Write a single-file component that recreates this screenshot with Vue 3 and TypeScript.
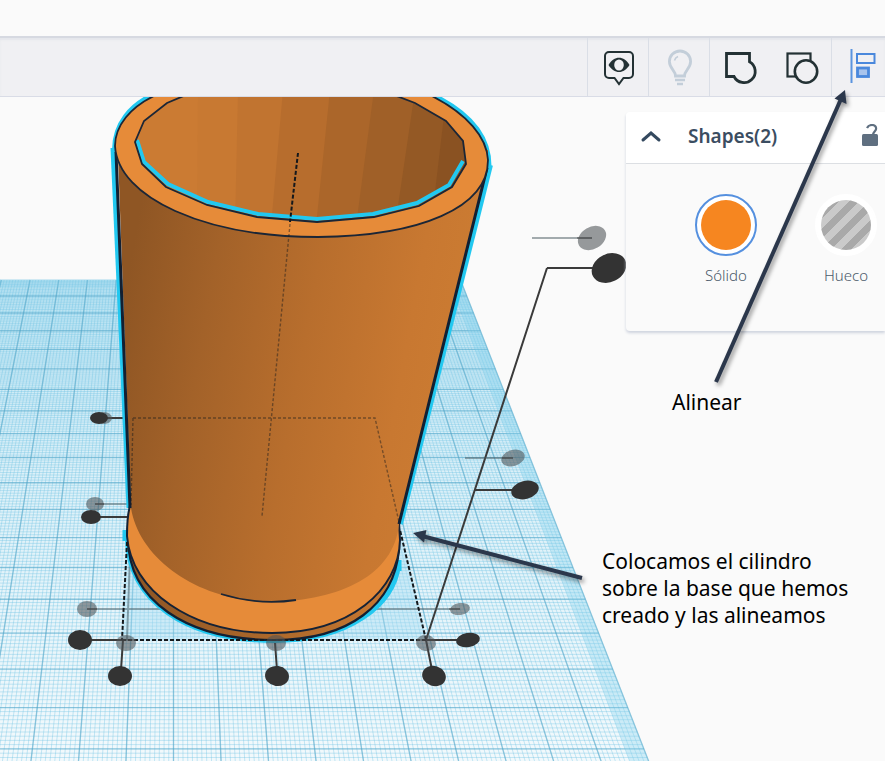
<script setup lang="ts">
import { ref } from 'vue'

interface Handle {
  x: number
  y: number
  rx: number
  ry: number
  tilt: number
  soft?: boolean
}

// Perspective of the workplane: every column meets at HORIZON, rows thin out with depth.
const HORIZON = -454
const CENTER_X = 173.5
const COLUMN_RATE = 0.0391

const columnX = (k: number, y: number): number => CENTER_X + k * (y - HORIZON) * COLUMN_RATE
const rowY = (n: number): number => 1 / (1 / 750 - n * 0.00002953) + HORIZON

function columnsPath(from: number, to: number, step: number): string {
  const parts: string[] = []
  for (let i = 0; i <= Math.round((to - from) / step); i++) {
    const k = from + i * step
    parts.push(`M${columnX(k, 280).toFixed(1)} 280L${columnX(k, 770).toFixed(1)} 770`)
  }
  return parts.join('')
}

function rowsPath(from: number, to: number, step: number): string {
  const parts: string[] = []
  for (let i = 0; i <= Math.round((to - from) / step); i++) {
    const y = rowY(from + i * step)
    parts.push(`M0 ${y.toFixed(1)}H${columnX(10, y).toFixed(1)}`)
  }
  return parts.join('')
}

const minorColumns = columnsPath(-7, 10, 0.1)
const minorRows = rowsPath(-1, 17.4, 0.1)
const majorColumns = columnsPath(-7, 10, 1)
const majorRows = rowsPath(0, 17, 1)

const handles: Handle[] = [
  { x: 104, y: 418, rx: 8, ry: 6, tilt: 0, soft: true },
  { x: 99, y: 418, rx: 9, ry: 6, tilt: 0 },
  { x: 95, y: 504, rx: 9, ry: 7, tilt: 0, soft: true },
  { x: 91, y: 517, rx: 10, ry: 7, tilt: 0 },
  { x: 87, y: 609, rx: 10, ry: 8, tilt: 0, soft: true },
  { x: 80, y: 640, rx: 12, ry: 10, tilt: 0 },
  { x: 126, y: 643, rx: 10, ry: 8, tilt: 0, soft: true },
  { x: 120, y: 676, rx: 12, ry: 10, tilt: 0 },
  { x: 276, y: 643, rx: 10, ry: 8, tilt: 0, soft: true },
  { x: 277, y: 676, rx: 12, ry: 10, tilt: 8 },
  { x: 426, y: 643, rx: 10, ry: 8, tilt: 8, soft: true },
  { x: 434, y: 676, rx: 12, ry: 10, tilt: 18 },
  { x: 460, y: 609, rx: 10, ry: 6, tilt: -8, soft: true },
  { x: 468, y: 640, rx: 12, ry: 7, tilt: -10 },
  { x: 513, y: 458, rx: 12, ry: 8, tilt: -16, soft: true },
  { x: 525, y: 490, rx: 14, ry: 9, tilt: -14 },
  { x: 592, y: 238, rx: 15, ry: 11, tilt: -30, soft: true },
  { x: 609, y: 268, rx: 18, ry: 14, tilt: -26 },
]

const innerPanels = [
  { points: '130,90 200,90 199,206 130,206', fill: '#cb7b33' },
  { points: '198,90 239,90 236,220 197,220', fill: '#c87932' },
  { points: '238,90 284,90 272,225 235,225', fill: '#c17430' },
  { points: '283,90 331,90 317,226 271,226', fill: '#b76d2d' },
  { points: '330,90 375,90 357,226 316,226', fill: '#ab662a' },
  { points: '374,90 416,90 396,226 356,226', fill: '#a06028' },
  { points: '415,90 448,110 432,226 395,226', fill: '#945925' },
  { points: '447,90 470,110 470,226 431,226', fill: '#8a5222' },
]

const panelOpen = ref(true)
const fillMode = ref<'solid' | 'hole'>('solid')
</script>

<template>
  <div class="app">
    <header class="topbar"></header>

    <nav class="toolbar" aria-label="Herramientas">
      <button class="tool" type="button" aria-label="Mostrar">
        <svg width="32" height="38" viewBox="0 0 32 38">
          <path d="M6 3H26a4 4 0 0 1 4 4V25a4 4 0 0 1-4 4H20.500L16 35 11.500 29H6a4 4 0 0 1-4-4V7a4 4 0 0 1 4-4Z" fill="none" stroke="#233134" stroke-width="2" />
          <path d="M5.500 16C8.500 11 12 8.800 16 8.800S23.500 11 26.500 16C23.500 20.800 20 23 16 23S8.500 20.800 5.500 16Z" fill="#233134" />
          <ellipse cx="16" cy="16" rx="4.800" ry="5.500" fill="#f0f0f3" />
        </svg>
      </button>
      <button class="tool" type="button" aria-label="Luz" disabled>
        <svg width="28" height="38" viewBox="0 0 28 38">
          <path d="M9.500 27C9.500 21.500 3.400 19.500 3.400 12.600A10.600 10.600 0 0 1 24.600 12.600C24.600 19.500 18.500 21.500 18.500 27Z" fill="none" stroke="#c3ced9" stroke-width="2.800" />
          <path d="M8.500 11.500A6 6 0 0 1 12 7.500" fill="none" stroke="#c3ced9" stroke-width="1.600" />
          <path d="M9 31H19M11 35H17" stroke="#c3ced9" stroke-width="2.400" />
        </svg>
      </button>
      <button class="tool" type="button" aria-label="Agrupar">
        <svg width="36" height="36" viewBox="0 0 36 36">
          <path d="M3.500 3.500H26.500V11.700A11.200 11.200 0 1 1 11 26.500H3.500Z" fill="none" stroke="#233134" stroke-width="2.800" />
        </svg>
      </button>
      <button class="tool plain" type="button" aria-label="Desagrupar">
        <svg width="36" height="36" viewBox="0 0 36 36">
          <rect x="3.500" y="3.500" width="23" height="23" fill="none" stroke="#233134" stroke-width="2.200" />
          <circle cx="22" cy="21.500" r="11.200" fill="#f0f0f3" stroke="#233134" stroke-width="2.600" />
        </svg>
      </button>
      <button class="tool last" type="button" aria-label="Alinear formas">
        <svg width="28" height="36" viewBox="0 0 28 36">
          <path d="M2.500 1V35" stroke="#5b94df" stroke-width="2" />
          <rect x="8" y="6" width="17.500" height="9" fill="none" stroke="#4a88dc" stroke-width="2" />
          <rect x="8.500" y="20" width="11" height="8.500" fill="#a9c4ec" stroke="#4a88dc" stroke-width="2.800" />
        </svg>
      </button>
    </nav>

    <main class="stage">
      <svg class="scene" viewBox="0 97 885 664" preserveAspectRatio="xMinYMin slice" aria-hidden="true">
        <defs>
          <linearGradient id="plane" x1="0" y1="280" x2="0" y2="761" gradientUnits="userSpaceOnUse">
            <stop offset="0" stop-color="#c0e5f3" />
            <stop offset="0.400" stop-color="#dbf0f8" />
            <stop offset="1" stop-color="#f2f9fc" />
          </linearGradient>
          <linearGradient id="wall" x1="118" y1="330" x2="450" y2="390" gradientUnits="userSpaceOnUse">
            <stop offset="0" stop-color="#8f5624" />
            <stop offset="0.250" stop-color="#a36229" />
            <stop offset="0.550" stop-color="#b86e2d" />
            <stop offset="0.850" stop-color="#c87831" />
            <stop offset="1" stop-color="#cb7b32" />
          </linearGradient>
          <linearGradient id="edge" x1="127" y1="0" x2="400" y2="0" gradientUnits="userSpaceOnUse">
            <stop offset="0" stop-color="#8d5524" />
            <stop offset="1" stop-color="#c97931" />
          </linearGradient>
          <clipPath id="bore">
            <path d="M182 97L167 103 144 121 135 142 142 164 166 187 207 205 257 217 317 222 374 217 419 206 452 187 466 164 463 141 446 121 415 103 398 97V90H182Z" />
          </clipPath>
        </defs>

        <path d="M0 280H460.500L652 770H0Z" fill="url(#plane)" />
        <g fill="none">
          <path :d="minorColumns" stroke="#6cc3e3" stroke-width="1" opacity="0.360" />
          <path :d="minorRows" stroke="#6cc3e3" stroke-width="1" opacity="0.360" />
          <path :d="majorColumns" stroke="#4a9fc2" stroke-width="1.400" opacity="0.480" />
          <path :d="majorRows" stroke="#4a9fc2" stroke-width="1.400" opacity="0.480" />
        </g>
        <path d="M449 280H460.500L652 770H633Z" fill="#7fd0ed" opacity="0.320" />
        <path d="M0 280H460.500L463 287H0Z" fill="#7fcbe6" opacity="0.250" />
        <path d="M126 540L122 640H426L399 525Z" fill="#a5dcf2" opacity="0.400" />

        <g class="guides">
          <path d="M123 640L121 670M275 643L277 670M426 640L432 670M80 640H122M426 640H462M91 517H127M100 418H124M475 490H520M547 268H600M547 268L426 640" />
          <path class="faint" d="M95 504H129M87 609H168M368 609H460M465 458H513M532 238H592M130 556L127 640" />
        </g>

        <g stroke="#22c8f0" fill="none" stroke-width="4">
          <path d="M125 530V541M399 560V571" stroke-width="5" />
          <path d="M128 538C128 600 186 640 274 640C350 640 393 604 398 565" stroke-width="6" />
          <path d="M113 148L129 508" stroke-width="5" />
          <path d="M490 165L400 524" stroke-width="6" />
          <path d="M156 93C130 104 114 124 114 150" />
          <path d="M428 93C470 112 489 137 489 166" stroke-width="5" />
        </g>

        <path d="M128 538C128 600 186 640 274 640C350 640 394 604 399 550V530H128Z" fill="url(#edge)" stroke="#122033" stroke-width="2.200" />
        <path d="M130 506C127 516 127 526 127 536C131 590 190 633 272 633C350 633 399 590 400 540L399 522Z" fill="#e68b39" stroke="#152235" stroke-width="2" />
        <path d="M118 156L131 508C139 559 199 602 272 602C340 600 394 576 399 524L488 168V150Z" fill="url(#wall)" />
        <path d="M221 594C250 603 276 603 296 600" fill="none" stroke="#1b2636" stroke-width="1.800" />
        <path d="M116 152L130 508M487 168L399 524" fill="none" stroke="#122033" stroke-width="3" />

        <path d="M156 95C130 107 115 126 115 146C118 198 205 237 318 237C420 236 488 208 488 160C487 138 468 114 430 95Z" fill="#e68b39" stroke="#1b2636" stroke-width="1.800" />
        <g clip-path="url(#bore)">
          <polygon v-for="panel in innerPanels" :key="panel.fill" :points="panel.points" :fill="panel.fill" />
          <path d="M137 140L144 162 168 184 208 202 258 214 317 219 373 214 417 203 449 185 463 161" fill="none" stroke="#22c8f0" stroke-width="4" />
        </g>
        <path d="M186 95L167 103 144 121 135 142 142 164 166 187 207 205 257 217 317 222 374 217 419 206 452 187 466 164 463 141 446 121 415 103 394 95" fill="none" stroke="#1b2636" stroke-width="1.800" />

        <g fill="none" stroke="#14181c">
          <path d="M298 153L290 222" stroke-width="2" stroke-dasharray="4 2" />
          <path d="M290 224L262 516M133 418H375L399 522M133 418L131 505" stroke-width="1.400" stroke-dasharray="3 2" opacity="0.450" />
          <path d="M127 542L122 640M122 640H426M426 640L400 530" stroke-width="2" stroke-dasharray="4 2" />
        </g>

        <ellipse
          v-for="(h, i) in handles"
          :key="i"
          :cx="h.x"
          :cy="h.y"
          :rx="h.rx"
          :ry="h.ry"
          :transform="`rotate(${h.tilt} ${h.x} ${h.y})`"
          :class="h.soft ? 'handle soft' : 'handle'"
        />
        <path class="through" d="M95 504H104M87 609H97M449 609H460M502 458H513M577 238H592M122 640H136M417 640H436" />
      </svg>

      <aside class="panel">
        <div class="panel-head">
          <button class="icon-btn" type="button" aria-label="Plegar" :aria-expanded="panelOpen" @click="panelOpen = !panelOpen">
            <svg width="22" height="14" viewBox="0 0 22 14">
              <path d="M3 11L11 4 19 11" fill="none" stroke="#34495f" stroke-width="3" stroke-linecap="round" />
            </svg>
          </button>
          <h2>Shapes(2)</h2>
          <button class="icon-btn lock" type="button" aria-label="Bloquear">
            <svg width="18" height="24" viewBox="0 0 18 24">
              <rect x="1" y="10" width="16" height="12" rx="1.500" fill="#5f6f80" />
              <path d="M6 4C7 1.800 8.500 1 11 1C14 1 15.500 3 15 5.300C14.600 7.500 12 8 12 11" fill="none" stroke="#5f6f80" stroke-width="2.200" />
            </svg>
          </button>
        </div>
        <div v-if="panelOpen" class="panel-body">
          <button class="choice" type="button" :aria-pressed="fillMode === 'solid'" @click="fillMode = 'solid'">
            <span class="swatch" :class="{ selected: fillMode === 'solid' }"><span class="disc solid"></span></span>
            <span>Sólido</span>
          </button>
          <button class="choice" type="button" :aria-pressed="fillMode === 'hole'" @click="fillMode = 'hole'">
            <span class="swatch" :class="{ selected: fillMode === 'hole' }"><span class="disc hole"></span></span>
            <span>Hueco</span>
          </button>
        </div>
      </aside>
    </main>

    <svg class="arrows" viewBox="0 0 885 761" preserveAspectRatio="xMinYMin slice" aria-hidden="true">
      <path d="M716 382L841 99" stroke="#2b374b" stroke-width="4" />
      <path d="M845 90L834.500 98.500 846.500 104Z" fill="#2b374b" />
      <path d="M582 578L422 536" stroke="#2b374b" stroke-width="4" />
      <path d="M413 533L426.500 530 424 542.500Z" fill="#2b374b" />
    </svg>
    <p class="note note-align">Alinear</p>
    <p class="note note-place">Colocamos el cilindro<br />sobre la base que hemos<br />creado y las alineamos</p>
  </div>
</template>

<style>
body {
  margin: 0;
  background: #fafafa;
}
</style>

<style scoped>
.app {
  position: relative;
  display: flex;
  flex-direction: column;
  min-height: 100vh;
  overflow: hidden;
  background: #fafafa;
  font-family: "Noto Sans", "Open Sans", sans-serif;
}

.topbar {
  height: 36px;
}

.toolbar {
  display: flex;
  justify-content: flex-end;
  box-sizing: border-box;
  height: 61px;
  background: #f0f0f3;
  border-top: 2px solid #d6d9e1;
  border-bottom: 1px solid #d9dce6;
  box-shadow: inset 0 2px 2px #e4e6eb;
}

.tool {
  display: flex;
  align-items: center;
  justify-content: center;
  box-sizing: border-box;
  width: 61px;
  padding: 2px 0 0 2px;
  border: 0;
  border-left: 1px solid #dadee6;
  background: none;
}

.tool.plain {
  border-left-color: transparent;
}

.tool.last {
  justify-content: flex-start;
  width: 54px;
  padding: 0 0 2px 17px;
}

.stage {
  position: relative;
  display: flex;
  flex: 1;
  align-items: flex-start;
  justify-content: flex-end;
  padding-top: 15px;
}

.scene {
  position: absolute;
  inset: 0;
  width: 100%;
  height: 100%;
}

.guides {
  fill: none;
  stroke: #3a3a3a;
  stroke-width: 2;
}

.guides .faint {
  stroke: #4a5a60;
  opacity: 0.5;
}

.handle {
  fill: #333;
}

.handle.soft {
  fill: #4d5357;
  opacity: 0.58;
}

.through {
  fill: none;
  stroke: #444;
  stroke-width: 2;
  opacity: 0.45;
}

.panel {
  position: relative;
  width: 259px;
  border-radius: 4px 0 0 4px;
  background: #fafafa;
  box-shadow: 0 2px 3px #ced3de;
}

.panel-head {
  display: flex;
  align-items: center;
  box-sizing: border-box;
  height: 52px;
  padding: 0 6px 4px 14px;
  border-bottom: 1px solid #dcdfe3;
  border-radius: 4px 0 0 0;
  background: #fff;
}

.icon-btn {
  display: flex;
  padding: 0;
  border: 0;
  background: none;
}

.lock {
  margin-left: auto;
}

h2 {
  margin: 0 0 0 26px;
  color: #3b4d61;
  font-size: 19px;
  font-weight: 600;
  line-height: 24px;
}

.panel-body {
  display: flex;
  padding: 30px 0 46px 40px;
  overflow: hidden;
}

.choice {
  display: flex;
  flex: none;
  flex-direction: column;
  align-items: center;
  gap: 9px;
  width: 120px;
  padding: 0;
  border: 0;
  background: none;
  color: #4c5b6a;
  font: 300 15px/20px "Noto Sans", "Open Sans", sans-serif;
}

.swatch {
  box-sizing: border-box;
  width: 62px;
  height: 62px;
  padding: 4px;
  border: 2px solid #fff;
  border-radius: 50%;
  background: #fff;
}

.swatch.selected {
  border-color: #5590df;
}

.disc {
  display: block;
  width: 50px;
  height: 50px;
  border-radius: 50%;
}

.solid {
  background: #f68620;
}

.hole {
  background: repeating-linear-gradient(135deg, #cacaca 0 7px, #a9a9a9 7px 14px);
}

.arrows {
  position: absolute;
  inset: 0;
  width: 100%;
  height: 100%;
  pointer-events: none;
  filter: drop-shadow(2px 3px 2px rgba(0, 0, 0, 0.4));
}

.note {
  position: absolute;
  margin: 0;
  color: #000;
  font-size: 21px;
  line-height: 27px;
  white-space: nowrap;
}

.note-align {
  top: 389px;
  left: 672px;
}

.note-place {
  top: 548px;
  left: 602px;
}
</style>
